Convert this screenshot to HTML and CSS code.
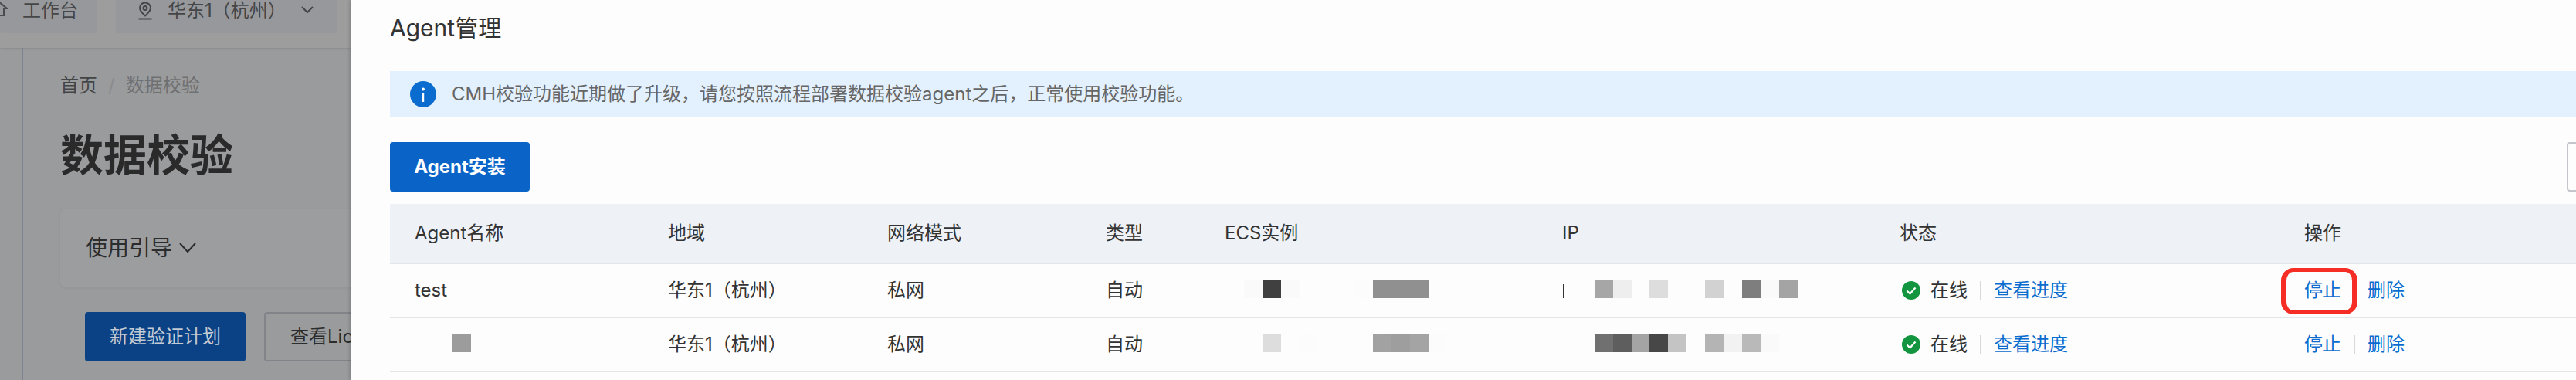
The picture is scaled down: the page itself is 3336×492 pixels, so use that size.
FILE: index.html
```html
<!DOCTYPE html>
<html lang="zh-CN">
<head>
    <meta charset="UTF-8">
    <title>数据校验</title>
    <link rel="stylesheet" href="styles.css">
</head>
<body>
    <div class="backdrop">
        <div class="topbar">
            <div class="chip chip-home">
                <svg class="home-icon" width="24" height="24" viewBox="0 0 24 24" fill="none" stroke="#4a4b4d" stroke-width="2"><path d="M1 11 12 2l11 9h-4v9H5v-9z"/></svg>
                <span>工作台</span>
            </div>
            <div class="chip chip-region">
                <svg class="pin-icon" width="20" height="24" viewBox="0 0 20 24" fill="none" stroke="#444547" stroke-width="2"><path d="M10 1.500c-4 0-7 3-7 6.800 0 3.700 3.500 7.200 7 10.200 3.500-3 7-6.500 7-10.200 0-3.800-3-6.800-7-6.800z"/><circle cx="10" cy="8.500" r="2.500"/><path d="M1.500 22.500h17"/></svg>
                <span>华东1（杭州）</span>
                <svg class="region-caret" width="16" height="10" viewBox="0 0 16 10" fill="none" stroke="#444547" stroke-width="2"><path d="M1 1l7 7 7-7"/></svg>
            </div>
        </div>
        <div class="page">
            <div class="sidebar"></div>
            <div class="content">
                <div class="breadcrumb">
                    <span class="crumb-home">首页</span>
                    <span class="crumb-sep">/</span>
                    <span>数据校验</span>
                </div>
                <h1>数据校验</h1>
                <div class="guide">
                    <span>使用引导</span>
                    <svg width="22" height="14" viewBox="0 0 22 14" fill="none" stroke="#2b2c2d" stroke-width="2"><path d="M1 1l10 11L21 1"/></svg>
                </div>
                <div class="page-actions">
                    <div class="page-btn page-btn-primary">新建验证计划</div>
                    <div class="page-btn">查看License</div>
                </div>
            </div>
        </div>
    </div>

    <div class="drawer">
        <div class="drawer-title">Agent管理</div>
        <div class="alert">
            <svg width="34" height="34" viewBox="0 0 34 34"><circle cx="17" cy="17" r="17" fill="#0a6cce"/><circle cx="17" cy="10.500" r="2" fill="#fff"/><rect x="15.800" y="15" width="2.400" height="12" fill="#fff"/></svg>
            <span>CMH校验功能近期做了升级，请您按照流程部署数据校验agent之后，正常使用校验功能。</span>
        </div>
        <div class="toolbar">
            <div class="install-btn">Agent安装</div>
            <div class="refresh-btn"></div>
        </div>
        <table class="agents">
            <colgroup>
                <col class="col-name"><col class="col-region"><col class="col-net"><col class="col-type">
                <col class="col-ecs"><col class="col-ip"><col class="col-status"><col>
            </colgroup>
            <thead>
                <tr>
                    <th>Agent名称</th><th>地域</th><th>网络模式</th><th>类型</th>
                    <th>ECS实例</th><th>IP</th><th>状态</th><th>操作</th>
                </tr>
            </thead>
            <tbody>
                <tr>
                    <td>test</td>
                    <td>华东1（杭州）</td>
                    <td>私网</td>
                    <td>自动</td>
                    <td>
                        <div class="mosaic mosaic-ecs"><i></i><i class="g-fa"></i><i class="g-40"></i><i class="g-fa"></i><i></i><i></i><i></i><i class="g-fc"></i><i class="g-90"></i><i class="g-90"></i><i class="g-90"></i></div>
                    </td>
                    <td>
                        <div class="mosaic mosaic-ip"><i class="cut"></i><i></i><i class="g-a6"></i><i class="g-ee"></i><i></i><i class="g-dd"></i><i></i><i></i><i class="g-d2"></i><i></i><i class="g-7e"></i><i class="g-fa"></i><i class="g-a4"></i></div>
                    </td>
                    <td>
                        <div class="status">
                            <svg width="24" height="24" viewBox="0 0 24 24"><circle cx="12" cy="12" r="12" fill="#13953f"/><path d="M6.500 12.500l4 3.800 7-7.800" fill="none" stroke="#fff" stroke-width="2.200"/></svg>
                            <span>在线</span><span class="sep"></span><a>查看进度</a>
                        </div>
                    </td>
                    <td>
                        <div class="ops"><a class="marked">停止</a><span class="sep"></span><a>删除</a></div>
                    </td>
                </tr>
                <tr>
                    <td>
                        <div class="mosaic mosaic-name"><i></i><i></i><i class="g-9c"></i></div>
                    </td>
                    <td>华东1（杭州）</td>
                    <td>私网</td>
                    <td>自动</td>
                    <td>
                        <div class="mosaic mosaic-ecs"><i></i><i></i><i class="g-dd"></i><i></i><i class="g-fc"></i><i></i><i></i><i></i><i class="g-a2"></i><i class="g-9e"></i><i class="g-a4"></i><i class="g-fc"></i></div>
                    </td>
                    <td>
                        <div class="mosaic mosaic-ip"><i></i><i></i><i class="g-70"></i><i class="g-5e"></i><i class="g-a4"></i><i class="g-47"></i><i class="g-c4"></i><i></i><i class="g-b4"></i><i class="g-f2"></i><i class="g-b9"></i><i class="g-fa"></i></div>
                    </td>
                    <td>
                        <div class="status">
                            <svg width="24" height="24" viewBox="0 0 24 24"><circle cx="12" cy="12" r="12" fill="#13953f"/><path d="M6.500 12.500l4 3.800 7-7.800" fill="none" stroke="#fff" stroke-width="2.200"/></svg>
                            <span>在线</span><span class="sep"></span><a>查看进度</a>
                        </div>
                    </td>
                    <td>
                        <div class="ops"><a>停止</a><span class="sep"></span><a>删除</a></div>
                    </td>
                </tr>
            </tbody>
        </table>
    </div>
</body>
</html>
```

FILE: styles.css
```css
* {
    box-sizing: border-box;
}
html, body {
    margin: 0;
    height: 492px;
    overflow: hidden;
}
body {
    display: flex;
    font-family: Inter, "Noto Sans CJK SC", sans-serif;
    font-size: 24px;
    line-height: 28px;
    color: #333;
    background: #fdfdfd;
}

/* dimmed page behind the drawer */
.backdrop {
    width: 455px;
    flex-shrink: 0;
    overflow: hidden;
    background: #9a9b9d;
    color: #454648;
}
.topbar {
    display: flex;
    height: 62px;
    background: #9d9d9e;
    box-shadow: 0 1px 3px rgba(0,0,0,0.12);
}
.chip {
    display: flex;
    height: 43px;
    background: #97989b;
    border-radius: 0 0 4px 4px;
}
.chip span {
    height: 28px;
}
.chip-home {
    width: 125px;
    overflow: hidden;
}
.home-icon {
    margin-left: -14px;
    margin-right: 19px;
    flex-shrink: 0;
}
.chip-region {
    width: 287px;
    margin-left: 25px;
    padding-left: 28px;
    position: relative;
}
.pin-icon {
    margin-top: 2px;
    margin-right: 19px;
}
.region-caret {
    margin-top: 8px;
    margin-left: auto;
    margin-right: 31px;
}
.page {
    display: flex;
    height: 430px;
}
.sidebar {
    width: 30px;
    flex-shrink: 0;
    border-right: 2px solid #7d8390;
}
.content {
    flex: 1;
    padding: 35px 0 0 48px;
    min-width: 0;
}
.breadcrumb {
    display: flex;
    gap: 14px;
    color: #6f7072;
}
.crumb-home {
    color: #434445;
}
.crumb-sep {
    color: #8a8b8d;
}
h1 {
    margin: 40px 0 33px;
    font-size: 56px;
    line-height: 72px;
    font-weight: 700;
    color: #2a2a2b;
}
.guide {
    display: flex;
    align-items: center;
    gap: 9px;
    width: 500px;
    height: 102px;
    padding-left: 33px;
    border-radius: 8px;
    background: #9c9d9f;
    box-shadow: 0 1px 4px rgba(0,0,0,0.06);
    font-size: 28px;
    color: #2b2c2d;
}
.page-actions {
    display: flex;
    gap: 24px;
    width: 600px;
    margin: 32px 0 0 32px;
}
.page-btn {
    display: flex;
    align-items: center;
    height: 64px;
    padding: 0 32px;
    flex-shrink: 0;
    border: 2px solid #82848a;
    border-radius: 4px;
    color: #2b2c2d;
}
.page-btn-primary {
    border: none;
    background: #0a4285;
    color: #c3cad4;
}

/* drawer */
.drawer {
    flex: 1;
    min-width: 0;
    padding: 14px 0 0 50px;
    box-shadow: -2px 0 4px rgba(0,0,0,0.2);
    position: relative;
    overflow: hidden;
}
.drawer-title {
    font-size: 30px;
    line-height: 44px;
}
.alert {
    display: flex;
    align-items: center;
    gap: 20px;
    height: 60px;
    margin-top: 34px;
    padding-left: 26px;
    background: #e3f0fd;
    color: #666;
}
.toolbar {
    display: flex;
    justify-content: space-between;
    margin-top: 32px;
}
.install-btn {
    display: flex;
    align-items: center;
    justify-content: center;
    width: 181px;
    height: 64px;
    border-radius: 4px;
    background: #0a64c8;
    color: #fff;
    font-weight: 700;
}
.refresh-btn {
    width: 52px;
    height: 64px;
    margin-right: -40px;
    border: 2px solid #c4c6cc;
    border-radius: 4px;
}

.agents {
    width: 100%;
    margin-top: 16px;
    table-layout: fixed;
    border-collapse: separate;
    border-spacing: 0;
}
.col-name { width: 328px; }
.col-region { width: 284px; }
.col-net { width: 283px; }
.col-type { width: 154px; }
.col-ecs { width: 437px; }
.col-ip { width: 437px; }
.col-status { width: 524px; }
.agents th, .agents td {
    padding: 0 0 0 32px;
    border-bottom: 2px solid #e3e5e8;
    text-align: left;
    font-weight: 400;
    white-space: nowrap;
}
.agents th {
    height: 78px;
    background: #eef1f6;
}
.agents td {
    height: 70px;
}
.agents a {
    color: #0a6cce;
}
.status, .ops {
    display: flex;
    align-items: center;
}
.status svg {
    margin-left: 3px;
    margin-right: 13px;
}
.sep {
    width: 2px;
    height: 24px;
    margin: 0 16px;
    background: #d8d8d8;
}
.marked {
    position: relative;
}
/* hand-drawn red mark on the stop link */
.marked::after {
    content: "";
    position: absolute;
    left: -30px;
    right: -21px;
    top: -15px;
    bottom: -17px;
    border: solid #f52d24;
    border-width: 5px 7px;
    border-radius: 16px;
}

/* pixelated redactions */
.mosaic {
    display: flex;
    height: 24px;
    margin-bottom: 5px;
}
.mosaic i {
    width: 23.9px;
    height: 24px;
    flex-shrink: 0;
}
.mosaic-name { margin-left: 1px; }
.mosaic-ecs { margin-left: 1px; }
.mosaic-ip { margin-left: -6px; }
.mosaic .cut {
    background: linear-gradient(#333, #333) 7px 6px / 2px 18px no-repeat;
}
.g-40 { background: #404040; }
.g-47 { background: #474747; }
.g-5e { background: #5e5e5e; }
.g-70 { background: #707070; }
.g-7e { background: #7e7e7e; }
.g-90 { background: #909090; }
.g-9c { background: #9c9c9c; }
.g-9e { background: #9e9e9e; }
.g-a2 { background: #a2a2a2; }
.g-a4 { background: #a4a4a4; }
.g-a6 { background: #a6a6a6; }
.g-b4 { background: #b4b4b4; }
.g-b9 { background: #b9b9b9; }
.g-c4 { background: #c4c4c4; }
.g-d2 { background: #d2d2d2; }
.g-dd { background: #dddddd; }
.g-ee { background: #eeeeee; }
.g-f2 { background: #f2f2f2; }
.g-fa { background: #fafafa; }
.g-fc { background: #fcfcfc; }
```
